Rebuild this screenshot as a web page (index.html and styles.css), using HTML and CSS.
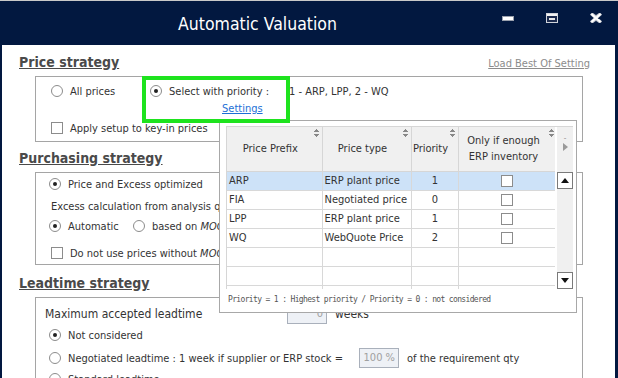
FILE: index.html
```html
<!DOCTYPE html>
<html lang="en">
<head>
  <meta charset="UTF-8">
  <title>Automatic Valuation</title>
  <link rel="stylesheet" href="styles.css">
</head>
<body>
  <div class="frame">
    <!-- Barra de título -->
    <div class="titlebar">
      <h1>Automatic Valuation</h1>
      <div class="controls">
        <span class="ctl">
          <svg width="12" height="5" viewBox="0 0 12 5"><rect x="0.5" y="0.5" width="11" height="4" fill="#fff" stroke="#9aa0ad"/></svg>
        </span>
        <span class="ctl">
          <svg width="12" height="10" viewBox="0 0 12 10"><rect x="0.5" y="0.5" width="11" height="9" fill="#1b2a4e" stroke="#d0d3da"/><rect x="1" y="1" width="10" height="2" fill="#f2f2f2"/><rect x="3" y="5" width="6" height="2" fill="#e8e8e8"/></svg>
        </span>
        <span class="ctl">
          <svg width="12" height="10" viewBox="0 0 12 10"><path d="M1 0.5 L6 4 L11 0.5 M1 9.5 L6 6 L11 9.5 M1 0.5 L11 9.5 M11 0.5 L1 9.5" stroke="#b8bcc6" stroke-width="3.2" fill="none"/><path d="M1.5 1 L10.5 9 M10.5 1 L1.5 9" stroke="#fff" stroke-width="2" fill="none"/></svg>
        </span>
      </div>
    </div>

    <div class="content">
      <!-- Price strategy -->
      <div class="group-head">
        <h2>Price strategy</h2>
        <a class="load-link">Load Best Of Setting</a>
      </div>
      <div class="box box-price">
        <div class="row">
          <span class="opt w-all"><span class="radio"></span>All prices</span>
          <span class="opt"><span class="radio on"></span><span class="sel-label">Select with priority :</span>1 - ARP, LPP, 2 - WQ</span>
        </div>
        <div class="row settings-row"><a class="settings">Settings</a></div>
        <div class="row row-check"><span class="check"></span>Apply setup to key-in prices</div>
      </div>

      <!-- Purchasing strategy -->
      <div class="group-head gap-purch">
        <h2>Purchasing strategy</h2>
      </div>
      <div class="box box-purch">
        <div class="row"><span class="radio on"></span>Price and Excess optimized</div>
        <div class="row r2 plain">Excess calculation from analysis quantity</div>
        <div class="row r3">
          <span class="opt w-auto"><span class="radio on"></span>Automatic</span>
          <span class="opt"><span class="radio"></span>based on&nbsp;<i>MOQ</i></span>
        </div>
        <div class="row r4 plain"><span class="check"></span>Do not use prices without&nbsp;<i>MOQ</i></div>
      </div>

      <!-- Leadtime strategy -->
      <div class="group-head gap-lead">
        <h2>Leadtime strategy</h2>
      </div>
      <div class="box box-lead">
        <div class="row max-row">
          <span class="max-label">Maximum accepted leadtime</span>
          <span class="field">0</span>
          <span class="after">weeks</span>
        </div>
        <div class="row l2"><span class="radio on"></span>Not considered</div>
        <div class="row l3">
          <span class="radio"></span>
          <span class="lead-text">Negotiated leadtime : 1 week if supplier or ERP stock =</span>
          <span class="field">100 %</span>
          <span class="after">of the requirement qty</span>
        </div>
        <div class="row l4"><span class="radio"></span>Standard leadtime</div>
      </div>
    </div>

    <!-- Popup de prioridades -->
    <div class="popup">
      <div class="grid">
        <div class="grid-main">
          <table>
            <colgroup>
              <col style="width:95px"><col style="width:89px"><col style="width:47px"><col style="width:99px">
            </colgroup>
            <thead>
              <tr>
                <th>Price Prefix<span class="sort"></span></th>
                <th>Price type<span class="sort"></span></th>
                <th>Priority<span class="sort"></span></th>
                <th>Only if enough<br>ERP inventory<span class="sort"></span></th>
              </tr>
            </thead>
            <tbody>
              <tr class="selected"><td>ARP</td><td>ERP plant price</td><td class="num">1</td><td class="box-cell"><span class="check"></span></td></tr>
              <tr><td>FIA</td><td>Negotiated price</td><td class="num">0</td><td class="box-cell"><span class="check"></span></td></tr>
              <tr><td>LPP</td><td>ERP plant price</td><td class="num">1</td><td class="box-cell"><span class="check"></span></td></tr>
              <tr><td>WQ</td><td>WebQuote Price</td><td class="num">2</td><td class="box-cell"><span class="check"></span></td></tr>
              <tr><td></td><td></td><td></td><td></td></tr>
              <tr><td></td><td></td><td></td><td></td></tr>
              <tr><td></td><td></td><td></td><td></td></tr>
            </tbody>
          </table>
        </div>
        <div class="grid-side">
          <div class="side-head">
            <span class="dash">-</span>
            <svg width="5" height="8" viewBox="0 0 5 8"><polygon points="0,0 5,4 0,8" fill="#9a9a9a"/></svg>
          </div>
          <div class="scrollbar">
            <span class="sbtn"><svg width="8" height="5" viewBox="0 0 8 5"><polygon points="0,5 4,0 8,5" fill="#111"/></svg></span>
            <span class="sbtn"><svg width="8" height="5" viewBox="0 0 8 5"><polygon points="0,0 8,0 4,5" fill="#111"/></svg></span>
          </div>
        </div>
      </div>
      <div class="legend">Priority = 1 : Highest priority / Priority = 0 : not considered</div>
    </div>

    <div class="highlight"></div>
  </div>
</body>
</html>
```

FILE: styles.css
```css
* {
  box-sizing: border-box;
}

body {
  margin: 0;
  font-family: "DejaVu Sans Condensed", "DejaVu Sans", sans-serif;
  font-size: 11px;
  color: #333;
  background-color: #021840;
}

.frame {
  position: relative;
  width: 618px;
  height: 378px;
  overflow: hidden;
  background-color: #021840;
  border-top: 1px solid #c9c9c9;
  padding: 0 3px 0 2px;
  display: flex;
  flex-direction: column;
}

/* Barra de título */
.titlebar {
  height: 44px;
  flex: none;
  display: flex;
  align-items: center;
  color: #fff;
}

.titlebar h1 {
  flex: 1;
  margin: 2px 0 0 176px;
  font-size: 17.5px;
  font-weight: normal;
}

.controls {
  align-self: flex-start;
  display: flex;
  margin-right: -3px;
  padding-top: 11px;
}

.ctl {
  width: 44px;
  height: 12px;
  display: flex;
  justify-content: center;
  align-items: center;
}

/* Conteúdo */
.content {
  flex: 1;
  background-color: #fff;
  padding: 9px 32px 0 17px;
}

.group-head {
  display: flex;
  justify-content: space-between;
  align-items: flex-end;
  margin-right: -7px;
}

.group-head h2 {
  margin: 0;
  font-size: 14px;
  line-height: 17px;
  color: #4a4a4a;
  text-decoration: underline;
}

.load-link {
  color: #8c8c8c;
  font-size: 11px;
  text-decoration: underline;
  margin-bottom: 1px;
}

.gap-purch {
  margin-top: 8px;
}

.gap-lead {
  margin-top: 10px;
}

.box {
  margin-left: 16px;
  margin-top: 5px;
  border: 1px solid #a5a5a5;
}

.row {
  display: flex;
  align-items: center;
  height: 18px;
  white-space: nowrap;
}

.opt {
  display: flex;
  align-items: center;
}

.radio {
  width: 12px;
  height: 12px;
  flex: none;
  border: 1px solid #8c8c8c;
  border-radius: 50%;
  background-color: #fff;
  margin-right: 7px;
  display: flex;
  justify-content: center;
  align-items: center;
}

.radio.on::after {
  content: '';
  width: 4px;
  height: 4px;
  border-radius: 50%;
  background-color: #222;
}

.check {
  width: 12px;
  height: 12px;
  flex: none;
  border: 1px solid #8c8c8c;
  background-color: #fff;
  margin-right: 7px;
}

/* Price strategy */
.box-price {
  height: 66px;
  padding: 5px 0 0 15px;
}

.w-all {
  width: 99px;
}

.sel-label {
  width: 120px;
}

.settings-row {
  height: 16px;
  padding-left: 171px;
}

.settings {
  color: #1c6fd6;
  text-decoration: underline;
}

.row-check {
  margin-top: 3px;
}

/* Purchasing strategy */
.box-purch {
  height: 93px;
  padding: 2px 0 0 13px;
}

.box-purch .plain {
  padding-left: 2px;
}

.r2 {
  margin-top: 4px;
}

.r3 {
  margin-top: 2px;
}

.r4 {
  margin-top: 9px;
}

.w-auto {
  width: 84px;
}

/* Leadtime strategy */
.box-lead {
  height: 120px;
  padding: 6px 0 0 13px;
}

.max-row {
  height: 20px;
  margin-left: -4px;
  font-size: 12px;
}

.max-label {
  width: 242px;
}

.field {
  width: 40px;
  height: 20px;
  flex: none;
  border: 1px solid #a9b0bb;
  background-color: #eef1f6;
  color: #a0a0a0;
  text-align: right;
  padding-right: 3px;
  line-height: 18px;
  font-size: 11px;
}

.after {
  margin-left: 8px;
}

.l2 {
  margin-top: 2px;
}

.l3 {
  margin-top: 4px;
  height: 20px;
}

.lead-text {
  width: 291px;
}

.l4 {
  margin-top: 2px;
}

/* Popup */
.popup {
  position: absolute;
  left: 219px;
  top: 119px;
  width: 358px;
  height: 193px;
  background-color: #fff;
  border: 1px solid #a8a8a8;
  padding: 5px 0 0 6px;
  z-index: 2;
}

.grid {
  display: flex;
  width: 347px;
  height: 163px;
  overflow: hidden;
  border-left: 1px solid #d6d6d6;
  border-top: 1px solid #d6d6d6;
}

.grid-main {
  width: 329px;
  overflow: hidden;
}

table {
  width: 330px;
  table-layout: fixed;
  border-collapse: collapse;
}

th {
  position: relative;
  height: 44px;
  background-color: #f0f0f0;
  border: 1px solid #d6d6d6;
  border-top: none;
  border-left: none;
  font-weight: normal;
  line-height: 16px;
  padding: 0 8px 0 0;
  text-align: center;
  white-space: nowrap;
}

.sort {
  position: absolute;
  top: 2px;
  right: 2px;
  width: 7px;
  height: 8px;
  background:
    linear-gradient(to top left, #888 50%, transparent 50%) left top / 4px 3px no-repeat,
    linear-gradient(to top right, #888 50%, transparent 50%) right top / 4px 3px no-repeat,
    linear-gradient(to bottom left, #888 50%, transparent 50%) left bottom / 4px 3px no-repeat,
    linear-gradient(to bottom right, #888 50%, transparent 50%) right bottom / 4px 3px no-repeat;
}

td {
  height: 19px;
  border: 1px solid #d8d8d8;
  border-left: none;
  padding: 0 1px 0 2px;
  white-space: nowrap;
  overflow: hidden;
}

td.num {
  text-align: center;
}

td.box-cell {
  padding: 0;
}

td.box-cell .check {
  display: block;
  margin: 0 auto;
  transform: translateX(-1px);
}

tr.selected td {
  background-color: #cde2f8;
}

.grid-side {
  width: 18px;
  display: flex;
  flex-direction: column;
  border-left: 2px solid #fff;
}

.side-head {
  height: 43px;
  background-color: #f0f0f0;
  display: flex;
  flex-direction: column;
  align-items: center;
  padding-top: 8px;
  color: #999;
  font-size: 8px;
  line-height: 8px;
}

.scrollbar {
  flex: 1;
  background-color: #f0f0f0;
  display: flex;
  flex-direction: column;
  justify-content: space-between;
  padding: 2px 1px 0 0;
}

.sbtn {
  width: 16px;
  height: 17px;
  border: 1px solid #7a7a7a;
  background-color: #fff;
  display: flex;
  justify-content: center;
  align-items: center;
}

.legend {
  margin-top: 5px;
  margin-left: 2px;
  font-family: "DejaVu Sans Mono", monospace;
  font-size: 8px;
  letter-spacing: -0.65px;
  color: #555;
  line-height: 12px;
}

/* Destaque verde */
.highlight {
  position: absolute;
  left: 142px;
  top: 75px;
  width: 148px;
  height: 47px;
  border: 4px solid #1ee31e;
  z-index: 3;
}
```
